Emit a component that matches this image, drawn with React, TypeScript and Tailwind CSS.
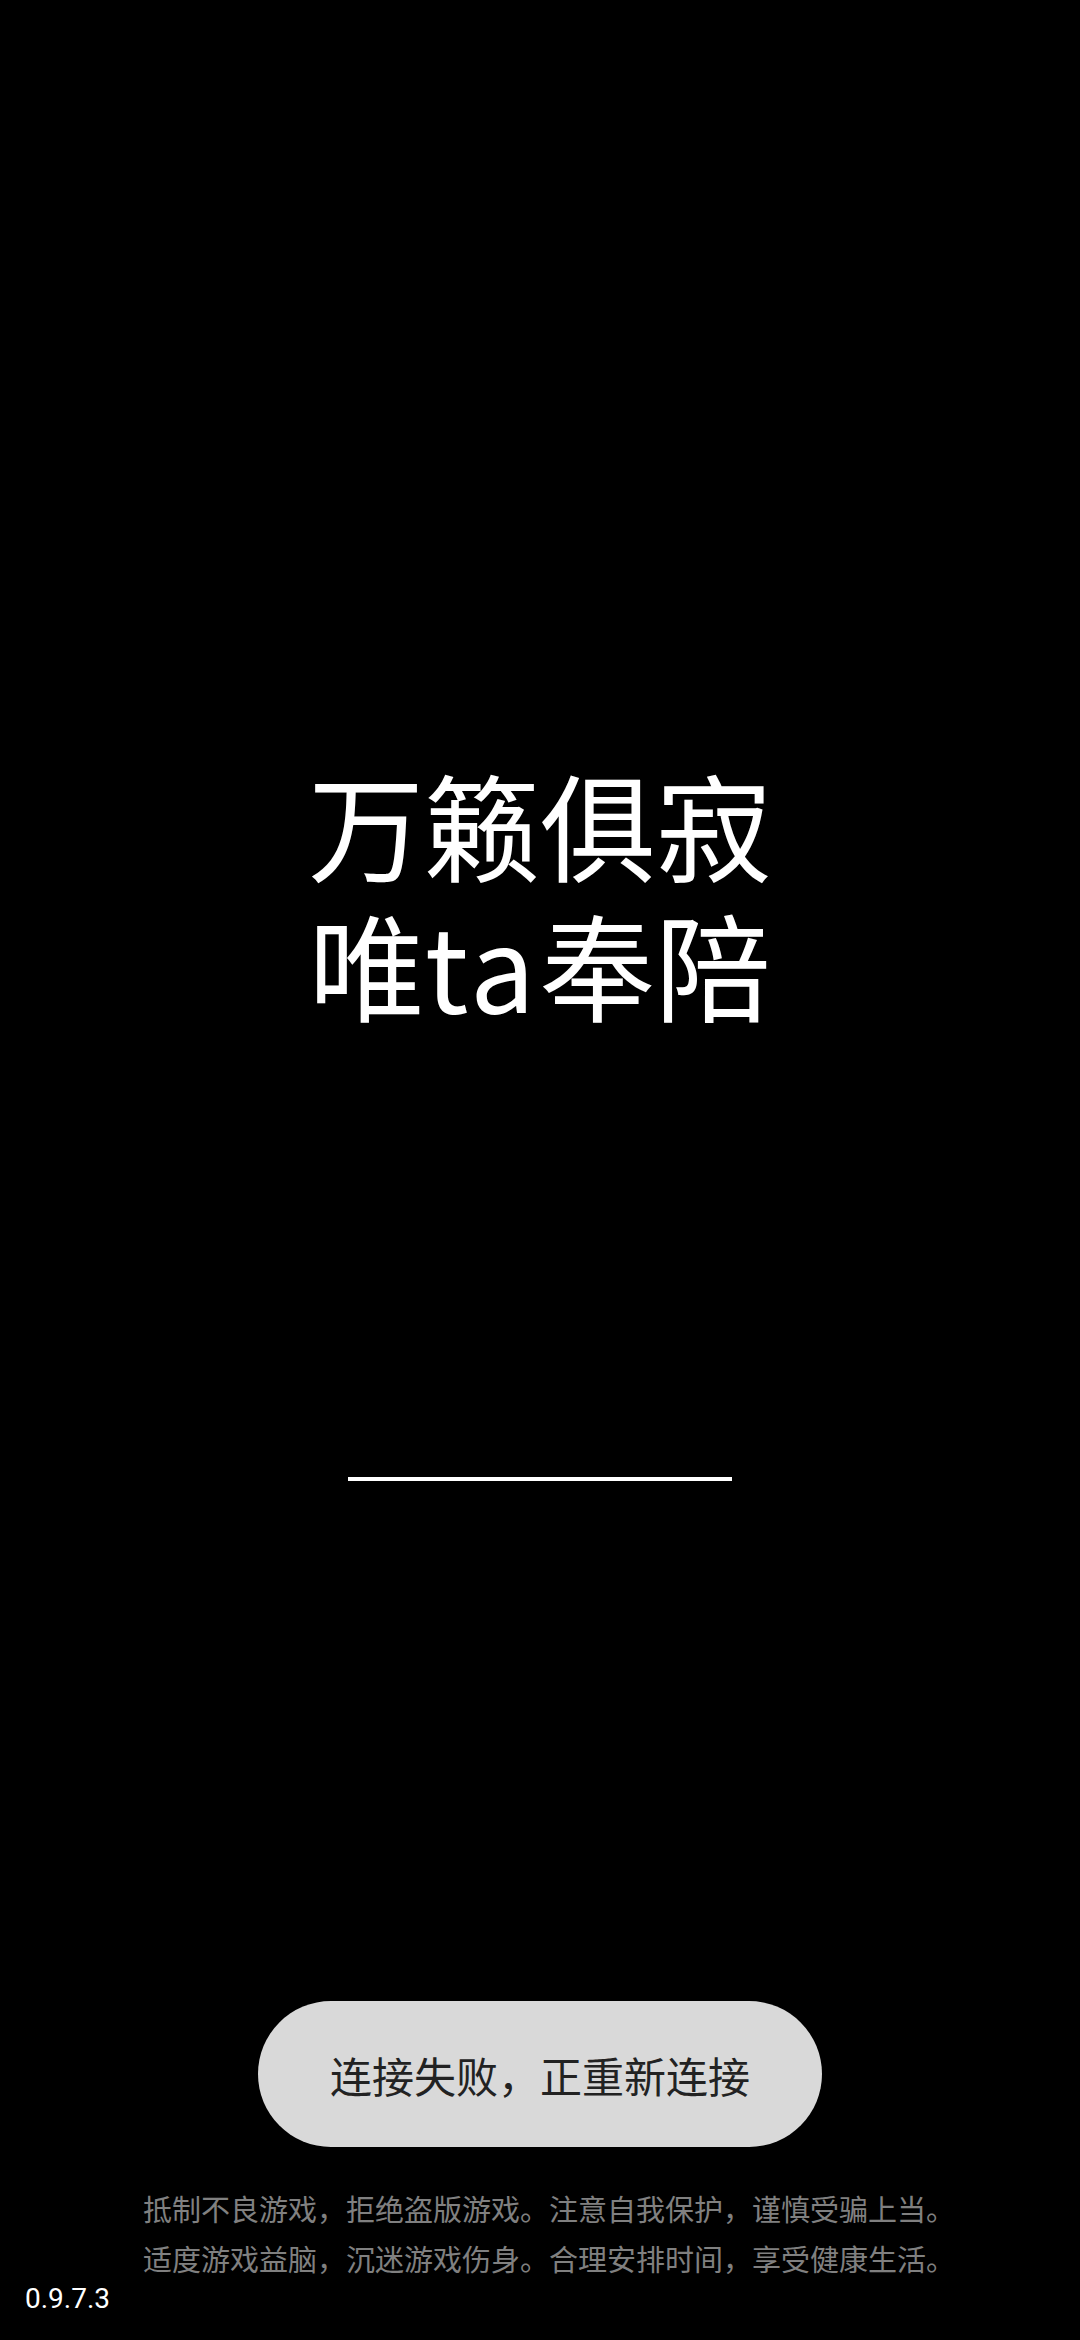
import React from 'react';

const cjk = 'font-["Noto_Sans_CJK_SC","Noto_Sans",sans-serif]';

const App: React.FC = () => {
  return (
    <div className={`relative flex h-[2340px] w-full flex-col items-center overflow-hidden bg-black ${cjk}`}>
      {/* Slogan */}
      <div className="pt-[752px] text-center text-[116px] leading-[140px] text-white">
        <div>万籁俱寂</div>
        <div>
          唯<span className="tracking-[4px]">ta</span>奉陪
        </div>
      </div>

      {/* Progress line */}
      <div className="mt-[445px] h-[4px] w-[384px] bg-white" />

      {/* Reconnect toast */}
      <div className="mt-[520px] flex h-[146px] w-[564px] items-center justify-center rounded-full bg-[#d9d9d9] text-[42px] text-[#222222]">
        连接失败，正重新连接
      </div>

      {/* Health notice */}
      <div className="mt-[36px] pl-[18px] text-center text-[29px] leading-[50px] text-[#808080]">
        <div>抵制不良游戏，拒绝盗版游戏。注意自我保护，谨慎受骗上当。</div>
        <div>适度游戏益脑，沉迷游戏伤身。合理安排时间，享受健康生活。</div>
      </div>

      {/* Version */}
      <div className="ml-[25px] self-start font-['Roboto',sans-serif] text-[28px] leading-[32px] text-white">
        0.9.7.3
      </div>
    </div>
  );
};

export default App;
